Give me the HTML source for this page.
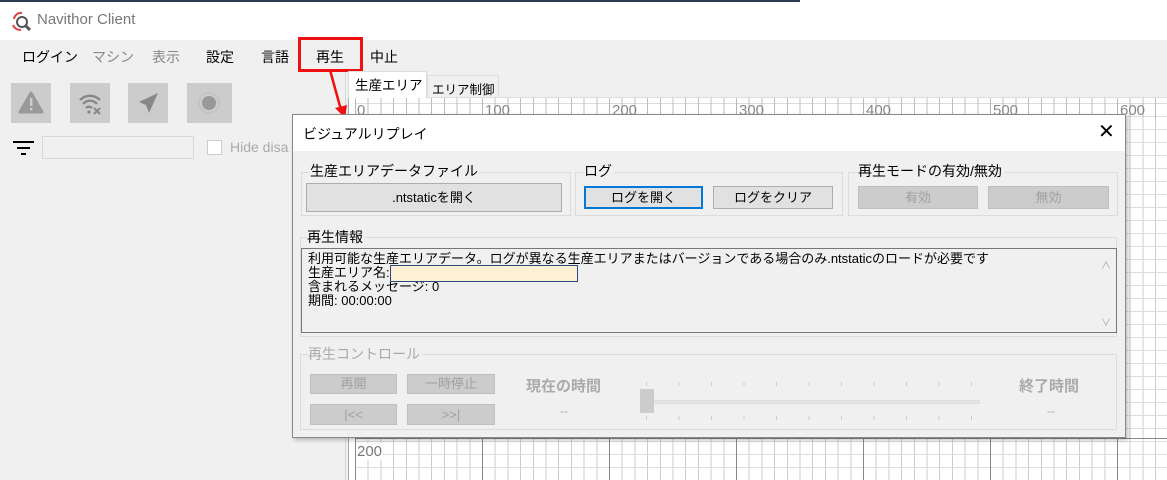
<!DOCTYPE html>
<html><head><meta charset="utf-8"><style>
*{margin:0;padding:0;box-sizing:border-box}
body{width:1167px;height:480px;overflow:hidden;background:#f0f0f0;font-family:"Liberation Sans","Noto Sans CJK JP",sans-serif;position:relative;color:#000}
.a{position:absolute}
.btn{position:absolute;background:#e1e1e1;border:1px solid #adadad;font-size:13px;text-align:center;line-height:24px}
.dis{background:#cccccc;border:1px solid #bfbfbf;color:#a0a0a0}
.grp{position:absolute;border:1px solid #dcdcdc}
.lbl{position:absolute;font-size:14px;background:#f0f0f0;padding-right:2px}
</style></head><body>
<div class="a" style="left:0;top:0;width:1167px;height:40px;background:#fff"></div>
<div class="a" style="left:0;top:0;width:800px;height:2px;background:#2b3a55"></div>
<svg class="a" style="left:11px;top:11px" width="22" height="20"><path d="M3 8a7 7 0 0 1 8-6" stroke="#e04040" stroke-width="2" fill="none"/><circle cx="11" cy="11" r="5" fill="none" stroke="#555" stroke-width="2"/><path d="M14 14l5 5" stroke="#555" stroke-width="3"/><path d="M2 14a8 8 0 0 0 8 5" stroke="#e04040" stroke-width="2" fill="none"/></svg>
<div class="a" style="left:37px;top:11px;font-size:15px;color:#777">Navithor Client</div>
<div class="a" style="left:22px;top:47px;font-size:14px;white-space:nowrap">
<span style="position:absolute;left:0">ログイン</span><span style="position:absolute;left:70px;color:#888">マシン</span><span style="position:absolute;left:130px;color:#888">表示</span><span style="position:absolute;left:184px">設定</span><span style="position:absolute;left:239px">言語</span><span style="position:absolute;left:294px">再生</span><span style="position:absolute;left:348px">中止</span></div>
<div class="a" style="left:298px;top:37px;width:65px;height:35px;border:3px solid #f01010"></div>
<div class="a" style="left:345px;top:72px;width:1px;height:408px;background:#d8d8d8"></div>
<div class="a" style="left:11px;top:83px;width:40px;height:40px;background:#ccc"><svg width="40" height="40"><path d="M20 10L31 29H9Z" fill="#999" stroke="#999" stroke-linejoin="round" stroke-width="3"/><rect x="19" y="15" width="2.4" height="8" fill="#ccc"/><rect x="19" y="25" width="2.4" height="2.4" fill="#ccc"/></svg></div>
<div class="a" style="left:70px;top:83px;width:40px;height:40px;background:#ccc"><svg width="40" height="40"><path d="M10 17a14 14 0 0 1 20 0M13 21a9 9 0 0 1 14 0M16 25a4 4 0 0 1 6 0" stroke="#888" stroke-width="2.4" fill="none"/><circle cx="19" cy="29" r="1.6" fill="#888"/><path d="M24 25l6 6M30 25l-6 6" stroke="#888" stroke-width="2"/></svg></div>
<div class="a" style="left:128px;top:83px;width:40px;height:40px;background:#ccc"><svg width="40" height="40"><path d="M30 10L11 19l7 3 3 8z" fill="#888"/></svg></div>
<div class="a" style="left:187px;top:83px;width:45px;height:40px;background:#ccc"><svg width="45" height="40"><circle cx="22" cy="20" r="10" fill="none" stroke="#c4c4c4" stroke-width="2"/><circle cx="22" cy="20" r="7" fill="#999"/></svg></div>
<svg class="a" style="left:13px;top:140px" width="22" height="16"><rect x="0" y="1" width="21" height="2" fill="#000"/><rect x="4" y="7" width="13" height="2" fill="#000"/><rect x="8" y="13" width="5" height="2" fill="#000"/></svg>
<div class="a" style="left:42px;top:136px;width:152px;height:23px;background:#f0f0f0;border:1px solid #d8d8d8"></div>
<div class="a" style="left:207px;top:140px;width:15px;height:15px;border:1px solid #ccc;background:#fff"></div>
<div class="a" style="left:230px;top:139px;font-size:14px;color:#aaa">Hide disa</div>
<div class="a" style="left:348px;top:78px;width:819px;height:20px;background:#f0f0f0;border-bottom:1px solid #ddd"></div>
<div class="a" style="left:348px;top:71px;width:79px;height:27px;background:#fff;border:1px solid #ddd;border-bottom:none;font-size:13.5px;padding:2px 0 0 6px;white-space:nowrap;overflow:hidden">生産エリア</div>
<div class="a" style="left:427px;top:75px;width:72px;height:23px;background:#f0f0f0;border:1px solid #ddd;font-size:12.5px;padding:3px 0 0 4px;white-space:nowrap;overflow:hidden">エリア制御</div>
<div class="a" style="left:348px;top:98px;width:819px;height:382px;background:#fff;border-left:1px solid #aaa"></div>
<div class="a" style="left:355px;top:100px;width:812px;height:380px;background:
repeating-linear-gradient(90deg,#888 0 1px,transparent 1px 127px),
repeating-linear-gradient(0deg,transparent 0 12px,#ddd 12px 13px),
repeating-linear-gradient(90deg,#ccc 0 1px,transparent 1px 12.7px)"></div>
<div class="a" style="left:355px;top:438px;width:812px;height:1px;background:#888"></div>
<div class="a" style="left:355px;top:98px;width:812px;height:20px;background:repeating-linear-gradient(90deg,#bbb 0 1px,transparent 1px 12.7px);opacity:.9"></div>
<div class="a" style="left:357px;top:102px;font-size:15px;color:#888;white-space:nowrap"><span style="position:absolute;left:0">0</span><span style="position:absolute;left:128px">100</span><span style="position:absolute;left:255px">200</span><span style="position:absolute;left:382px">300</span><span style="position:absolute;left:509px">400</span><span style="position:absolute;left:636px">500</span><span style="position:absolute;left:763px">600</span></div>
<div class="a" style="left:357px;top:443px;font-size:15px;color:#777;background:#fff">200</div>
<svg class="a" style="left:320px;top:68px" width="40" height="60"><path d="M10 2L21 42" stroke="#f01010" stroke-width="2.5"/><path d="M15 40l10 10 2-13z" fill="#f01010"/></svg>
<div class="a" style="left:292px;top:114px;width:834px;height:324px;background:#f0f0f0;border:1px solid #888;box-shadow:2px 2px 4px rgba(0,0,0,.25)"></div>
<div class="a" style="left:293px;top:115px;width:832px;height:36px;background:#fff"></div>
<div class="a" style="left:303px;top:124px;font-size:14px">ビジュアルリプレイ</div>
<div class="a" style="left:1098px;top:122px;font-size:20px;line-height:20px">✕</div>
<div class="grp" style="left:301px;top:172px;width:270px;height:44px"></div>
<div class="lbl" style="left:310px;top:161px">生産エリアデータファイル</div>
<div class="btn" style="left:306px;top:183px;width:256px;height:29px;line-height:27px">.ntstaticを開く</div>
<div class="grp" style="left:575px;top:172px;width:268px;height:44px"></div>
<div class="lbl" style="left:584px;top:161px">ログ</div>
<div class="btn" style="left:584px;top:186px;width:119px;height:23px;line-height:20px;border:2px solid #0078d7">ログを開く</div>
<div class="btn" style="left:713px;top:186px;width:120px;height:23px;line-height:21px">ログをクリア</div>
<div class="grp" style="left:848px;top:172px;width:270px;height:44px"></div>
<div class="lbl" style="left:858px;top:161px">再生モードの有効/無効</div>
<div class="btn dis" style="left:858px;top:186px;width:120px;height:23px;line-height:21px">有効</div>
<div class="btn dis" style="left:988px;top:186px;width:121px;height:23px;line-height:21px">無効</div>
<div class="grp" style="left:300px;top:237px;width:817px;height:100px"></div>
<div class="lbl" style="left:307px;top:227px">再生情報</div>
<div class="a" style="left:301px;top:248px;width:816px;height:85px;background:#f0f0f0;border:1px solid #777;font-size:13px;line-height:14px;padding:3px 0 0 6px">
利用可能な生産エリアデータ。ログが異なる生産エリアまたはバージョンである場合のみ.ntstaticのロードが必要です<br>
生産エリア名:<br>含まれるメッセージ: 0<br>期間: 00:00:00</div>
<div class="a" style="left:390px;top:265px;width:188px;height:17px;background:#fdf0d5;border:1px solid #2a4a80"></div>
<div class="a" style="left:1101px;top:257px;font-size:10px;color:#aaa">∧</div>
<div class="a" style="left:1101px;top:314px;font-size:10px;color:#aaa">∨</div>
<div class="grp" style="left:300px;top:354px;width:817px;height:76px"></div>
<div class="lbl" style="left:308px;top:344px;color:#aaa">再生コントロール</div>
<div class="btn dis" style="left:310px;top:374px;width:87px;height:20px;line-height:18px">再開</div>
<div class="btn dis" style="left:407px;top:374px;width:88px;height:20px;line-height:18px">一時停止</div>
<div class="btn dis" style="left:310px;top:404px;width:87px;height:21px;line-height:19px">|&lt;&lt;</div>
<div class="btn dis" style="left:407px;top:404px;width:88px;height:21px;line-height:19px">&gt;&gt;|</div>
<div class="a" style="left:526px;top:375px;font-size:15px;font-weight:bold;color:#aaa">現在の時間</div>
<div class="a" style="left:1019px;top:375px;font-size:15px;font-weight:bold;color:#aaa">終了時間</div>
<div class="a" style="left:560px;top:404px;font-size:12px;color:#aaa">--</div>
<div class="a" style="left:1047px;top:404px;font-size:12px;color:#aaa">--</div>
<div class="a" style="left:644px;top:400px;width:336px;height:4px;background:#e6e6e6;border:1px solid #ddd"></div>
<div class="a" style="left:640px;top:389px;width:14px;height:24px;background:#ccc"></div>
<div class="a" style="left:646px;top:382px;width:340px;height:4px;background:repeating-linear-gradient(90deg,#ccc 0 1px,transparent 1px 32.5px)"></div>
<div class="a" style="left:646px;top:416px;width:340px;height:4px;background:repeating-linear-gradient(90deg,#ccc 0 1px,transparent 1px 32.5px)"></div>
</body></html>
